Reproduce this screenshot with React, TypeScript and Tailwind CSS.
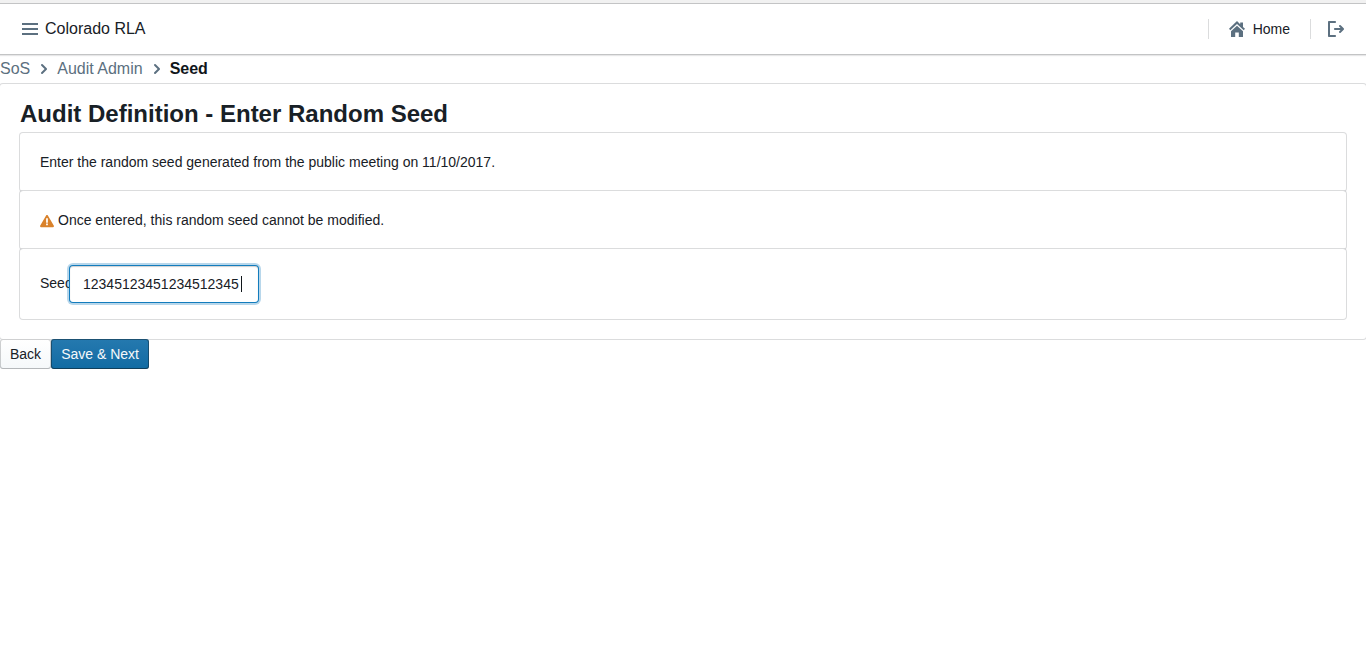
import React, { useState } from "react";

function Icon({ d, className = "size-4" }: { d: string; className?: string }) {
  return (
    <svg viewBox="0 0 16 16" className={`shrink-0 fill-current ${className}`} aria-hidden="true">
      <path fillRule="evenodd" d={d} />
    </svg>
  );
}

const MENU = "M0 2h16v2H0zM0 7h16v2H0zM0 12h16v2H0z";
const HOME =
  "M2 10.2V16H6.2v-4.6h3.6V16H14v-5.8L8 4.8zM16 7.8 14 5.9V1.4h-2.8v1.8L8 0 0 7.8l1.3 1.5L8 3l6.7 6.3z";
const LOG_OUT =
  "M7 14H2V2h5c.55 0 1-.45 1-1s-.45-1-1-1H1C.45 0 0 .45 0 1v14c0 .55.45 1 1 1h6c.55 0 1-.45 1-1s-.45-1-1-1zm8.71-6.71l-3-3a1.003 1.003 0 0 0-1.42 1.42L12.59 7H7c-.55 0-1 .45-1 1s.45 1 1 1h5.59l-1.29 1.29c-.19.18-.3.43-.3.71a1.003 1.003 0 0 0 1.71.71l3-3c.18-.18.29-.43.29-.71 0-.28-.11-.53-.29-.71z";
const WARNING =
  "M15.84 13.5l.01-.01-7-12-.01.01c-.17-.3-.48-.5-.85-.5s-.67.2-.85.5l-.01-.01-7 12 .01.01c-.09.15-.15.31-.15.5 0 .55.45 1 1 1h14c.55 0 1-.45 1-1 0-.19-.06-.35-.15-.5zm-6.85-.51h-2v-2h2v2zm0-3h-2v-5h2v5z";
const CHEVRON =
  "M10.71 7.29l-4-4a1.003 1.003 0 0 0-1.42 1.42L8.59 8 5.3 11.29c-.19.18-.3.43-.3.71a1.003 1.003 0 0 0 1.71.71l4-4c.18-.18.29-.43.29-.71 0-.28-.11-.53-.29-.71z";

function Card({ children }: { children: React.ReactNode }) {
  return (
    <div className="relative rounded-[3px] bg-white p-5 shadow-[0_0_0_1px_rgba(16,22,26,0.15)]">{children}</div>
  );
}

function Divider() {
  return <span className="h-5 w-px bg-[#10161a]/15" />;
}

export default function App() {
  const [seed, setSeed] = useState("12345123451234512345");
  return (
    <div className="min-h-screen bg-white font-['Liberation_Sans',Arial,sans-serif] text-sm leading-[18px] text-[#182026]">
      <div className="h-1 border-b border-[#c3c4c5] bg-[#f1f1f1]" />
      <header className="flex h-[51px] items-center justify-between border-b border-[#c3c4c5] px-[22px] shadow-[0_1px_1px_rgba(16,22,26,0.1)]">
        <div className="flex items-center gap-[7px] text-base leading-5">
          <button type="button" aria-label="Menu" className="text-[#5c7080]">
            <Icon d={MENU} />
          </button>
          <span>Colorado RLA</span>
        </div>
        <nav className="flex items-center">
          <Divider />
          <a href="#home" className="flex items-center gap-2 px-5">
            <Icon d={HOME} className="size-4 text-[#5c7080]" />
            Home
          </a>
          <Divider />
          <button type="button" aria-label="Log out" className="ml-[17px] text-[#5c7080]">
            <Icon d={LOG_OUT} />
          </button>
        </nav>
      </header>

      <nav aria-label="Breadcrumb" className="mb-px flex h-7 items-center text-base text-[#5c7080]">
        <a href="#sos">SoS</a>
        <Icon d={CHEVRON} className="mr-[5px] ml-1.5 size-4" />
        <a href="#audit-admin">Audit Admin</a>
        <Icon d={CHEVRON} className="mr-[5px] ml-1.5 size-4" />
        <span className="font-bold text-[#10161a]">Seed</span>
      </nav>

      <main>
        <Card>
          <h1 className="mb-2.5 text-2xl leading-[19px] font-bold">Audit Definition - Enter Random Seed</h1>
          <Card>Enter the random seed generated from the public meeting on 11/10/2017.</Card>
          <Card>
            <p className="flex items-end gap-1">
              <Icon d={WARNING} className="mb-0.5 size-3.5 translate-y-px text-[#d9822b]" />
              Once entered, this random seed cannot be modified.
            </p>
          </Card>
          <Card>
            <div className="flex h-[30px] items-center">
              <label htmlFor="seed" className="w-[30px] pb-0.5 whitespace-nowrap">
                Seed
              </label>
              <div className="relative">
                <input
                  id="seed"
                  type="text"
                  value={seed}
                  onChange={(e) => setSeed(e.target.value)}
                  className="block h-9 w-[188px] rounded-[3px] bg-white px-[13px] caret-transparent shadow-[0_0_0_1px_#137cbd,0_0_0_3px_rgba(19,124,189,0.3),inset_0_1px_1px_rgba(16,22,26,0.2)] outline-none"
                />
                <span className="absolute top-2.5 right-4 h-4 w-px bg-[#10161a]" />
              </div>
            </div>
          </Card>
        </Card>
        <div className="relative flex">
          <button
            type="button"
            className="h-[30px] rounded-[3px] bg-linear-to-b from-white to-[#f5f8fa] px-2.5 shadow-[inset_0_0_0_1px_rgba(16,22,26,0.2),inset_0_-1px_0_rgba(16,22,26,0.1)]"
          >
            Back
          </button>
          <button
            type="button"
            className="h-[30px] rounded-[3px] bg-linear-to-b from-[#2579af] to-[#106ba3] px-2.5 text-[#f5f8fa] shadow-[inset_0_0_0_1px_rgba(16,22,26,0.4),inset_0_-1px_0_rgba(16,22,26,0.2)]"
          >
            Save &amp; Next
          </button>
        </div>
      </main>
    </div>
  );
}
